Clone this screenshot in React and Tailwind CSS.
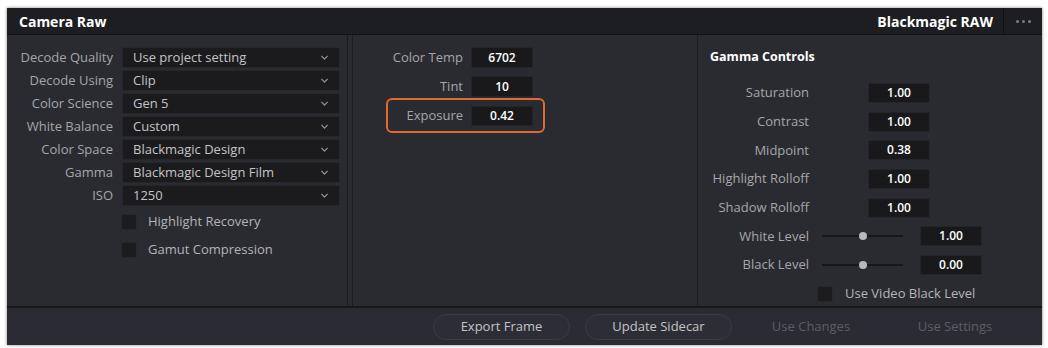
import React from 'react';

const font = { fontFamily: '"Open Sans", "Noto Sans", sans-serif' };

function Chevron() {
  return (
    <svg className="w-[9px] h-[9px] text-[#8c8c90]" viewBox="0 0 10 10" fill="none" stroke="currentColor" strokeWidth="1.4">
      <path d="M1.5 3.2 L5 6.7 L8.5 3.2" />
    </svg>
  );
}

function Select({ value }) {
  return (
    <div className="w-[218px] h-[21px] bg-[#1b1b1e] border border-[#26272c] flex items-center justify-between pl-[10px] pr-[10px] text-[#c4c4c6]">
      <span>{value}</span>
      <Chevron />
    </div>
  );
}

function NumBox({ value, className = '' }) {
  return (
    <div className={`w-[62px] h-[20px] bg-[#19191b] border border-[#24252a] flex items-center justify-center text-white font-semibold text-[12px] ${className}`}>
      {value}
    </div>
  );
}

function Check() {
  return <div className="w-[16px] h-[16px] bg-[#1c1c1f] border border-[#27282d]" />;
}

function Slider() {
  return (
    <div className="w-[81px] h-[8px] flex items-center relative">
      <div className="w-full h-[2px] bg-[#17171a]" />
      <div className="absolute left-[37px] top-0 w-[8px] h-[8px] rounded-full bg-[#b9b9bc]" />
    </div>
  );
}

const leftRows = [
  ['Decode Quality', 'Use project setting'],
  ['Decode Using', 'Clip'],
  ['Color Science', 'Gen 5'],
  ['White Balance', 'Custom'],
  ['Color Space', 'Blackmagic Design'],
  ['Gamma', 'Blackmagic Design Film'],
  ['ISO', '1250'],
];

const gammaRows = [
  ['Saturation', '1.00'],
  ['Contrast', '1.00'],
  ['Midpoint', '0.38'],
  ['Highlight Rolloff', '1.00'],
  ['Shadow Rolloff', '1.00'],
];

export default function App() {
  return (
    <div className="w-[1048px] h-[348px] bg-white pt-[8px] pl-[7px] text-[13px]" style={font}>
      <div className="w-[1035px] h-[337px] bg-[#2a2b31] flex flex-col shadow-[0_0_3px_rgba(0,0,0,0.5)] overflow-hidden">
        {/* header */}
        <div className="h-[27px] bg-[#1d1e21] border-b border-[#141416] flex items-center text-white font-bold">
          <span className="pl-[12px] text-[14px]">Camera Raw</span>
          <span className="ml-auto text-[14px] pr-[10px]">Blackmagic RAW</span>
          <div className="w-px h-full bg-[#121214]" />
          <div className="w-[38px] flex items-center justify-center gap-[3px]">
            <span className="w-[3px] h-[3px] rounded-full bg-[#7d7d82]" />
            <span className="w-[3px] h-[3px] rounded-full bg-[#7d7d82]" />
            <span className="w-[3px] h-[3px] rounded-full bg-[#7d7d82]" />
          </div>
        </div>

        {/* body */}
        <div className="flex h-[271px]">
          {/* left */}
          <div className="w-[341px] border-r border-[#1a1a1d] pt-[12px]">
            <div className="flex flex-col gap-[2px]">
              {leftRows.map(([label, value]) => (
                <div key={label} className="flex items-center">
                  <span className="w-[106px] text-right text-[#a6a6a9]">{label}</span>
                  <div className="ml-[9px]">
                    <Select value={value} />
                  </div>
                </div>
              ))}
            </div>
            <div className="flex flex-col gap-[10px] mt-[7px] ml-[114px] text-[#b4b4b7]">
              <div className="flex items-center gap-[11px] h-[18px]">
                <Check />
                <span>Highlight Recovery</span>
              </div>
              <div className="flex items-center gap-[11px] h-[18px]">
                <Check />
                <span>Gamut Compression</span>
              </div>
            </div>
          </div>

          {/* middle */}
          <div className="w-[346px] border-l border-r border-[#1c1c1f] ml-[4px] pt-[12px] pl-[33px]">
            <div className="flex items-center h-[21px]">
              <span className="w-[77px] text-right text-[#a6a6a9]">Color Temp</span>
              <NumBox value="6702" className="ml-[8px] h-[21px]" />
            </div>
            <div className="flex items-center h-[21px] mt-[8px]">
              <span className="w-[77px] text-right text-[#a6a6a9]">Tint</span>
              <NumBox value="10" className="ml-[8px] h-[21px]" />
            </div>
            <div className="w-[159px] h-[35px] mt-[1px] border-2 border-[#e06a32] rounded-[6px] flex items-center">
              <span className="w-[75px] text-right text-[#a6a6a9]">Exposure</span>
              <NumBox value="0.42" className="ml-[8px] border-[#5a3a2c]" />
            </div>
          </div>

          {/* right */}
          <div className="flex-1 pl-[12px] pt-[13px]">
            <div className="text-white font-bold text-[12.5px] h-[18px] flex items-center">Gamma Controls</div>
            <div className="flex flex-col gap-[8.7px] mt-[17px]">
              {gammaRows.map(([label, value]) => (
                <div key={label} className="flex items-center h-[20px]">
                  <span className="w-[99px] text-right text-[#a6a6a9]">{label}</span>
                  <NumBox value={value} className="ml-[59px]" />
                </div>
              ))}
              {[['White Level', '1.00'], ['Black Level', '0.00']].map(([label, value]) => (
                <div key={label} className="flex items-center h-[20px]">
                  <span className="w-[99px] text-right text-[#a6a6a9]">{label}</span>
                  <div className="ml-[13px]">
                    <Slider />
                  </div>
                  <NumBox value={value} className="ml-[17px]" />
                </div>
              ))}
              <div className="flex items-center h-[16px] mt-[2px] ml-[107px] gap-[12px] text-[#b4b4b7]">
                <Check />
                <span>Use Video Black Level</span>
              </div>
            </div>
          </div>
        </div>

        {/* footer */}
        <div className="flex-1 border-t-2 border-[#17171a] bg-[#2b2c33] flex items-center pl-[426px]">
          <button className="w-[137px] h-[26px] rounded-[13px] border border-[#3b3c43] bg-[#2d2e35] text-[#c4c4c6]">
            Export Frame
          </button>
          <button className="w-[147px] h-[26px] rounded-[13px] border border-[#3b3c43] bg-[#2d2e35] text-[#c4c4c6] ml-[15px]">
            Update Sidecar
          </button>
          <button className="w-[140px] h-[26px] text-[#5c5d63] ml-[9px]">Use Changes</button>
          <button className="w-[140px] h-[26px] text-[#5c5d63] ml-[4px]">Use Settings</button>
        </div>
      </div>
    </div>
  );
}
